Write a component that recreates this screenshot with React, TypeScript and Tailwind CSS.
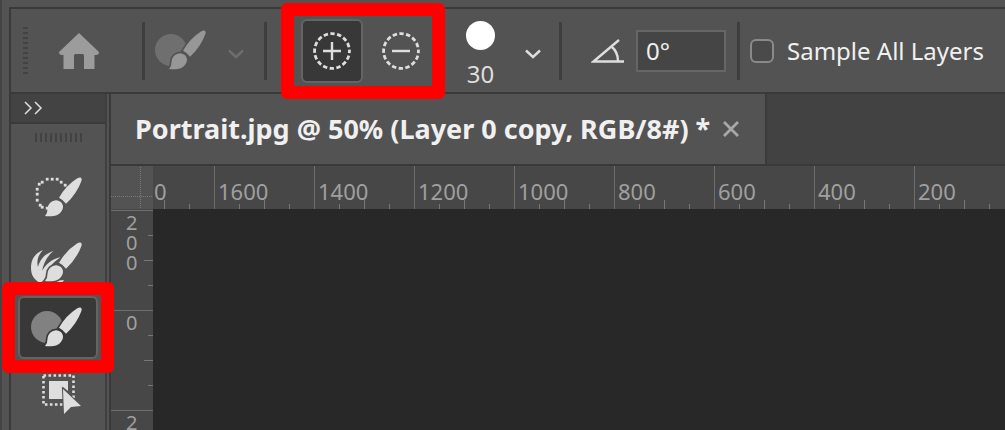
import { useState } from 'react';
import type { ReactNode } from 'react';

const columnLabels = ['1600', '1400', '1200', '1000', '800', '600', '400', '200'];
const rowLabels = ['200', '0', '2'];

const lassoDots = [
  [16, 2], [21, 2], [26, 2], [30, 5], [34, 8], [11, 5], [8, 7],
  [6, 12], [6, 17], [6, 23], [9, 28], [11, 30], [16, 31],
];

function Brush({ color, gap }: { color: string; gap: string }) {
  return (
    <g fill={color} stroke={gap} strokeWidth="3.4" paintOrder="stroke">
      <path d="M28 20.8 Q35 8.5 46 1.6 Q48.8 -.2 50 .8 Q51.2 2 50.2 4.4 Q45.8 16.5 35 26.8 Q32.4 23 28 20.8Z" />
      <path d="M14 39 Q16.6 36.5 16.5 32 C16.8 27 20.5 23.4 25.5 23.2 Q31 24 32 29 C32.4 34.5 27 39.6 19.5 39.3 Q16 39.5 14 39Z" />
    </g>
  );
}

function RefineIcon({ color, disc, gap }: { color: string; disc: string; gap: string }) {
  return (
    <svg className="h-[42px] w-[54px]" viewBox="0 0 54 42" aria-hidden="true">
      <circle cx="16" cy="20" r="16" fill={disc} />
      <Brush color={color} gap={gap} />
    </svg>
  );
}

function QuickSelectIcon() {
  return (
    <svg className="h-[42px] w-[54px]" viewBox="0 0 54 42" aria-hidden="true">
      <Brush color="#dedede" gap="#535353" />
      {lassoDots.map(([x, y]) => (
        <rect key={`${x}-${y}`} x={x - 1.2} y={y - 1.2} width="2.8" height="2.8" fill="#dedede" />
      ))}
    </svg>
  );
}

function HairIcon() {
  return (
    <svg className="h-[42px] w-[54px]" viewBox="0 0 54 42" aria-hidden="true">
      <g fill="#dedede">
        <path d="M12 8 C3 12 0 18 0 26 C0 34 4 38 8 40 L9 30 C4.5 22 6 14 12 8Z" />
        <path d="M22.5 9 C13 12 8.5 18 6.5 27 L11 30 C12 22 16 14 22.5 9Z" />
        <path d="M30 15 C20 17 14 23 10.5 30 L16 34 C17 26 22 20 30 15Z" />
        <path d="M1 27 L15 29 L17 36 Q24 39 33 38 L31 41 H9 Q1 36 1 27Z" />
      </g>
      <Brush color="#dedede" gap="#535353" />
    </svg>
  );
}

function ObjectIcon() {
  return (
    <svg className="h-[42px] w-[54px]" viewBox="0 0 54 42" aria-hidden="true">
      <rect x="12.5" y="3.5" width="30" height="29" fill="none" stroke="#dedede" strokeWidth="2.6" strokeDasharray="2.6 2.4" />
      <path d="M18 9 H37 V19 L32 15 V27 H18Z" fill="#dedede" />
      <path d="M32 17 L50 34 L40 35 L33 42Z" fill="#dedede" stroke="#535353" strokeWidth="2" paintOrder="stroke" />
    </svg>
  );
}

function Chevron({ color }: { color: string }) {
  return (
    <svg className="mt-1.5 h-[10px] w-[16px]" viewBox="0 0 16 10" fill="none" stroke={color} strokeWidth="2.4" aria-hidden="true">
      <path d="M1 1.5 L8 8 L15 1.5" />
    </svg>
  );
}

function DashedCircle({ plus }: { plus?: boolean }) {
  return (
    <svg className="h-[40px] w-[40px]" viewBox="0 0 40 40" fill="none" stroke="#dedede" aria-hidden="true">
      <circle cx="20" cy="20" r="17.4" strokeWidth="2.8" strokeDasharray="4.4 2.434" strokeDashoffset="2.2" />
      <path d={plus ? 'M11 20 H29 M20 11 V29' : 'M11 20 H29'} strokeWidth="2.4" />
    </svg>
  );
}

function Separator() {
  return <div className="h-[58px] w-[3px] shrink-0 bg-[#3e3e3e]" />;
}

function Highlight() {
  return <span className="pointer-events-none absolute -inset-[13px] z-10 rounded-md border-[13px] border-[#ff0000]" />;
}

function OptionsBar() {
  const [angle, setAngle] = useState('0°');

  return (
    <header className="flex h-[85px] items-center border-b-2 border-[#3a3a3a] pl-3">
      <div className="flex w-[5px] shrink-0 flex-col gap-[3px]">
        {Array.from({ length: 10 }, (_, i) => (
          <span key={i} className="h-[2px] bg-[#424242]" />
        ))}
      </div>
      <button aria-label="Home" className="ml-[30px] shrink-0">
        <svg className="h-[38px] w-[42px]" viewBox="0 0 42 38" fill="#9c9c9c" aria-hidden="true">
          <path d="M21 1 L41 20 Q41 23 38 23 H36.5 V37 H26 V23.5 Q26 22 24.5 22 H17.5 Q16 22 16 23.5 V37 H5.5 V23 H4 Q1 23 1 20Z" />
        </svg>
      </button>
      <div className="ml-[42px]"><Separator /></div>
      <button aria-label="Tool preset" className="ml-2.5 flex shrink-0 items-center gap-[19px]">
        <RefineIcon color="#979797" disc="#6f6f6f" gap="#535353" />
        <Chevron color="#6e6e6e" />
      </button>
      <div className="ml-5"><Separator /></div>
      <div className="relative ml-[27px] flex h-[70px] w-[138px] shrink-0 items-center pl-[7px]">
        <button aria-label="Add to selection" className="flex h-16 w-[62px] items-center justify-center rounded-md border-2 border-[#646464] bg-[#383838]">
          <DashedCircle plus />
        </button>
        <button aria-label="Subtract from selection" className="ml-[18px]">
          <DashedCircle />
        </button>
        <Highlight />
      </div>
      <button aria-label="Brush size" className="ml-[34px] flex shrink-0 items-center gap-[30px]">
        <span className="flex w-[29px] flex-col items-center gap-3 pt-1.5 text-2xl leading-6 text-[#dedede]">
          <span className="h-[29px] w-[29px] rounded-full bg-white" />
          30
        </span>
        <Chevron color="#dedede" />
      </button>
      <div className="ml-[18px]"><Separator /></div>
      <label htmlFor="angle" aria-label="Angle" className="ml-[29px] shrink-0">
        <svg className="h-[26px] w-[34px]" viewBox="0 0 34 26" fill="none" stroke="#dedede" strokeWidth="2.4" aria-hidden="true">
          <path d="M28 2 L2.5 23.5 H33 M20.5 8.5 Q27 14 27 23" />
        </svg>
      </label>
      <input
        id="angle"
        value={angle}
        onChange={(e) => setAngle(e.target.value)}
        className="ml-[11px] h-[42px] w-[90px] shrink-0 border-2 border-[#666666] bg-[#454545] px-2 text-2xl text-[#f0f0f0]"
      />
      <div className="ml-[11px]"><Separator /></div>
      <input
        id="sample-all"
        type="checkbox"
        className="ml-2.5 h-6 w-6 shrink-0 appearance-none rounded-md border-2 border-[#8a8a8a] bg-[#4a4a4a] checked:bg-[#8a8a8a]"
      />
      <label htmlFor="sample-all" className="pl-[13px] text-2xl whitespace-nowrap text-[#f0f0f0]">
        Sample All Layers
      </label>
    </header>
  );
}

function Tool({ label, active, children }: { label: string; active?: boolean; children: ReactNode }) {
  return (
    <div className="relative mx-1 flex h-[65px] items-center justify-center">
      <button
        aria-label={label}
        aria-pressed={!!active}
        className={
          active
            ? 'flex h-[63px] w-[80px] items-center justify-center rounded-md border-2 border-[#646464] bg-[#383838]'
            : 'flex h-[63px] w-[80px] items-center justify-center'
        }
      >
        {children}
      </button>
      {active && <Highlight />}
    </div>
  );
}

function ToolPanel() {
  return (
    <aside className="flex w-[96px] shrink-0 flex-col border-r-2 border-[#404040]">
      <button aria-label="Expand tools" className="h-[30px] shrink-0 border-b-2 border-[#3a3a3a] bg-[#434343] pl-3">
        <svg className="h-[14px] w-[20px]" viewBox="0 0 20 14" fill="none" stroke="#dedede" strokeWidth="1.5" aria-hidden="true">
          <path d="M2 1 L8 7 L2 13 M12 1 L18 7 L12 13" />
        </svg>
      </button>
      <div className="flex h-[41px] shrink-0 justify-center gap-[3px] pt-[9px]">
        {Array.from({ length: 10 }, (_, i) => (
          <span key={i} className="h-[9px] w-[2px] bg-[#424242]" />
        ))}
      </div>
      <Tool label="Quick selection"><QuickSelectIcon /></Tool>
      <Tool label="Refine hair"><HairIcon /></Tool>
      <Tool label="Refine edge brush" active>
        <RefineIcon color="#dedede" disc="#818181" gap="#383838" />
      </Tool>
      <Tool label="Object selection"><ObjectIcon /></Tool>
    </aside>
  );
}

function ColumnTicks() {
  return (
    <div className="flex h-[9px] items-end">
      <span className="w-[24px]" />
      <span className="h-[5px] w-[25px] border-l border-[#777777]" />
      <span className="h-[9px] w-[25px] border-l border-[#777777]" />
      <span className="h-[5px] w-[25px] border-l border-[#777777]" />
    </div>
  );
}

function TopRuler() {
  return (
    <div className="flex h-[43px] shrink-0 bg-[#474747] text-[22px] leading-[34px] text-[#a0a0a0]">
      <div className="flex w-[42px] shrink-0 bg-[#535353]">
        <svg className="h-full w-full" viewBox="0 0 42 43" stroke="#7a7a7a" strokeDasharray="1 1" aria-hidden="true">
          <path d="M29.5 1 V43 M0 30.5 H42" />
        </svg>
      </div>
      <div className="flex w-[61px] shrink-0 flex-col overflow-hidden pl-px">
        <span className="h-[34px] pt-2">0</span>
        <div className="flex h-[9px] items-end pl-2.5">
          <span className="h-[9px] w-[25px] shrink-0 border-l border-[#777777]" />
          <span className="h-[5px] w-[25px] shrink-0 border-l border-[#777777]" />
        </div>
      </div>
      {columnLabels.map((label) => (
        <div key={label} className="flex w-[100px] shrink-0 flex-col border-l border-[#6e6e6e]">
          <span className="h-[34px] pt-2 pl-[3px]">{label}</span>
          <ColumnTicks />
        </div>
      ))}
    </div>
  );
}

function SideRuler() {
  return (
    <div className="flex w-[42px] shrink-0 flex-col bg-[#474747] pt-px text-xl leading-5 text-[#a0a0a0]">
      {rowLabels.map((label, i) => (
        <div key={i} className="flex h-[100px] shrink-0 justify-between border-t border-[#6e6e6e]">
          <div className="flex flex-col pt-0.5 pl-[15px]">
            {label.split('').map((digit, n) => (
              <span key={n}>{digit}</span>
            ))}
          </div>
          <div className="flex w-[9px] flex-col items-end pt-6">
            <span className="h-[25px] w-[5px] border-t border-[#777777]" />
            <span className="h-[25px] w-[9px] border-t border-[#777777]" />
            <span className="h-[25px] w-[5px] border-t border-[#777777]" />
          </div>
        </div>
      ))}
    </div>
  );
}

function DocumentPane() {
  return (
    <main className="ml-[2px] flex min-w-0 flex-1 flex-col overflow-hidden border-l-2 border-[#3a3a3a]">
      <div className="flex h-[72px] shrink-0 border-b-2 border-[#3a3a3a] bg-[#424242]">
        <div className="flex items-center gap-[13px] border-r-2 border-[#3a3a3a] bg-[#535353] pr-[26px] pl-6">
          <h1 className="text-[27px] font-bold whitespace-nowrap text-[#f0f0f0]">
            Portrait.jpg @ 50% (Layer 0 copy, RGB/8#) *
          </h1>
          <button aria-label="Close tab">
            <svg className="h-[16px] w-[16px]" viewBox="0 0 16 16" stroke="#a8a8a8" strokeWidth="2.8" aria-hidden="true">
              <path d="M1 1 L15 15 M15 1 L1 15" />
            </svg>
          </button>
        </div>
      </div>
      <TopRuler />
      <div className="flex min-h-0 flex-1 overflow-hidden">
        <SideRuler />
        <div className="flex-1 bg-[#282828]" />
      </div>
    </main>
  );
}

export default function App() {
  return (
    <div className="flex h-screen overflow-hidden border-l-2 border-[#444444] bg-[#535353] pt-[7px] pl-[7px] font-['Noto_Sans','Open_Sans',sans-serif]">
      <div className="flex min-w-0 flex-1 flex-col border-t-2 border-l-2 border-[#3a3a3a]">
        <OptionsBar />
        <div className="flex min-h-0 flex-1">
          <ToolPanel />
          <DocumentPane />
        </div>
      </div>
    </div>
  );
}
